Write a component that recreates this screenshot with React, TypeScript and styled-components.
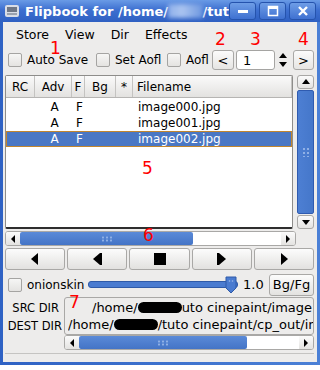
import React from "react";
import styled, { createGlobalStyle } from "styled-components";

const GlobalStyle = createGlobalStyle`
  body {
    margin: 0;
    background: #ffffff;
    font-family: "DejaVu Sans", "Liberation Sans", sans-serif;
  }
`;

const files = ["image000.jpg", "image001.jpg", "image002.jpg"];

const Tri = ({ dir, bar }: { dir: "l" | "r"; bar?: "l" | "r" }) => (
  <svg width="14" height="14" viewBox="0 0 14 14">
    {dir === "l" ? <polygon points="3,7 10,1 10,13" fill="#000" /> : <polygon points="11,7 4,1 4,13" fill="#000" />}
    {bar === "r" && <rect x="10" y="1" width="2" height="12" fill="#000" />}
    {bar === "l" && <rect x="2" y="1" width="2" height="12" fill="#000" />}
  </svg>
);

export default function App() {
  return (
    <>
      <GlobalStyle />
      <Window>
        <TitleBar>
          <AppIcon>
            <svg width="16" height="16" viewBox="0 0 16 16">
              <rect x="1" y="2" width="14" height="12" rx="2" fill="#d9dde6" />
              <rect x="3" y="4" width="10" height="5" fill="#6f7786" />
              <rect x="3" y="10" width="10" height="2" fill="#9aa2b0" />
            </svg>
          </AppIcon>
          <Title>Flipbook for /home/</Title>
          <Blur />
          <Title>/tut</Title>
          <WinButtons>
            <WinBtn>
              <svg width="12" height="12" viewBox="0 0 12 12"><rect x="1" y="5" width="10" height="3" fill="#fff" /></svg>
            </WinBtn>
            <WinBtn>
              <svg width="12" height="12" viewBox="0 0 12 12"><rect x="1.5" y="1.5" width="9" height="9" fill="none" stroke="#fff" strokeWidth="1.5" /><rect x="1" y="1" width="10" height="3" fill="#fff" /></svg>
            </WinBtn>
            <WinBtn>
              <svg width="12" height="12" viewBox="0 0 12 12"><path d="M2 2 L10 10 M10 2 L2 10" stroke="#fff" strokeWidth="2.4" /></svg>
            </WinBtn>
          </WinButtons>
        </TitleBar>
        <Body>
          <MenuBar>
            <MenuItem>Store</MenuItem>
            <MenuItem>View</MenuItem>
            <MenuItem>Dir</MenuItem>
            <MenuItem>Effects</MenuItem>
          </MenuBar>
          <ToolRow>
            <Check />
            <CheckLabel $w={69}>Auto Save</CheckLabel>
            <Check />
            <CheckLabel $w={52}>Set Aofl</CheckLabel>
            <Check />
            <CheckLabel $w={24}>Aofl</CheckLabel>
            <SmallBtn $w={22}>&lt;</SmallBtn>
            <SpinEntry>1</SpinEntry>
            <SpinArrows>
              <svg width="8" height="16" viewBox="0 0 8 16">
                <polygon points="4,1 8,6 0,6" fill="#000" />
                <polygon points="4,15 8,10 0,10" fill="#000" />
              </svg>
            </SpinArrows>
            <SmallBtn $w={21}>&gt;</SmallBtn>
          </ToolRow>
          <ListArea>
            <ListFrame>
              <HeaderRow>
                <HeadCell $w={29}>RC</HeadCell>
                <HeadCell $w={37}>Adv</HeadCell>
                <HeadCell $w={13}>F</HeadCell>
                <HeadCell $w={31}>Bg</HeadCell>
                <HeadCell $w={17}>*</HeadCell>
                <HeadCell $w={0} $grow>Filename</HeadCell>
              </HeaderRow>
              {files.map((f, i) => (
                <Row key={f} $sel={i === 2}>
                  <Cell $w={29} />
                  <Cell $w={37} $center>A</Cell>
                  <Cell $w={13} $center>F</Cell>
                  <Cell $w={31} />
                  <Cell $w={17} />
                  <Cell $w={0} $grow>{f}</Cell>
                </Row>
              ))}
            </ListFrame>
            <VScroll>
              <ArrowBox $h={14}>
                <svg width="8" height="6" viewBox="0 0 8 6"><polygon points="4,0 8,5 0,5" fill="#000" /></svg>
              </ArrowBox>
              <VThumb>
                <Grip />
              </VThumb>
              <ArrowBox $h={14}>
                <svg width="8" height="6" viewBox="0 0 8 6"><polygon points="4,6 8,1 0,1" fill="#000" /></svg>
              </ArrowBox>
            </VScroll>
          </ListArea>
          <HScrollRow>
            <HScroll $w={291}>
              <HArrow>
                <svg width="6" height="8" viewBox="0 0 6 8"><polygon points="1,4 5,0 5,8" fill="#000" /></svg>
              </HArrow>
              <HThumb $w={173}><HGrip /></HThumb>
              <Trough />
              <HArrow>
                <svg width="6" height="8" viewBox="0 0 6 8"><polygon points="5,4 1,0 1,8" fill="#000" /></svg>
              </HArrow>
            </HScroll>
          </HScrollRow>
          <PlayRow>
            <PlayBtn><Tri dir="l" /></PlayBtn>
            <PlayBtn><Tri dir="l" bar="r" /></PlayBtn>
            <PlayBtn>
              <svg width="14" height="14" viewBox="0 0 14 14"><rect x="1" y="1" width="12" height="12" fill="#000" /></svg>
            </PlayBtn>
            <PlayBtn><Tri dir="r" bar="l" /></PlayBtn>
            <PlayBtn><Tri dir="r" /></PlayBtn>
          </PlayRow>
          <OnionRow>
            <Check />
            <CheckLabel $w={61}>onionskin</CheckLabel>
            <Slider>
              <Track />
              <Thumb>
                <svg width="12" height="18" viewBox="0 0 12 18">
                  <path d="M1 1 H11 V12 L6 17 L1 12 Z" fill="#4a7bd0" stroke="#2f5aa8" strokeWidth="1" />
                  <circle cx="4.5" cy="5" r="0.8" fill="#9fbbe8" />
                  <circle cx="7.5" cy="5" r="0.8" fill="#9fbbe8" />
                </svg>
              </Thumb>
            </Slider>
            <SliderValue>1.0</SliderValue>
            <BgBtn>Bg/Fg</BgBtn>
          </OnionRow>
          <DirArea>
            <DirLabels>
              <span>SRC DIR</span>
              <span>DEST DIR</span>
            </DirLabels>
            <DirCol>
              <MarkSlot>
                <SlotMark>7</SlotMark>
              </MarkSlot>
              <DirBox>
                <DirLine $indent={24}>/home/<Redact $w={44} />uto cinepaint/image|</DirLine>
                <DirLine $indent={0}>/home/<Redact $w={44} />/tuto cinepaint/cp_out/ima</DirLine>
              </DirBox>
              <HScroll $w={250}>
                <HArrow>
                  <svg width="6" height="8" viewBox="0 0 6 8"><polygon points="1,4 5,0 5,8" fill="#000" /></svg>
                </HArrow>
                <HThumb $w={168}><HGrip /></HThumb>
                <Trough />
                <HArrow>
                  <svg width="6" height="8" viewBox="0 0 6 8"><polygon points="5,4 1,0 1,8" fill="#000" /></svg>
                </HArrow>
              </HScroll>
            </DirCol>
          </DirArea>
          <Separator />
        </Body>
        <Mark $x={50} $y={38}>1</Mark>
        <Mark $x={215} $y={29}>2</Mark>
        <Mark $x={250} $y={29}>3</Mark>
        <Mark $x={298} $y={29}>4</Mark>
        <Mark $x={142} $y={158}>5</Mark>
        <Mark $x={143} $y={225}>6</Mark>
      </Window>
    </>
  );
}

const Window = styled.div`
  position: relative;
  width: 320px;
  height: 365px;
  box-sizing: border-box;
  display: flex;
  flex-direction: column;
  background: linear-gradient(to right, #2f62c4, #4b80d6);
  padding: 0 3px 3px;
`;

const TitleBar = styled.div`
  height: 22px;
  flex-shrink: 0;
  display: flex;
  align-items: center;
  margin: 0 -3px;
  padding: 0 4px;
  background: linear-gradient(to bottom, #6a9be6, #3d6fd0 45%, #2f60c2);
`;

const AppIcon = styled.div`
  width: 16px;
  height: 16px;
  margin-right: 5px;
  display: flex;
`;

const Title = styled.span`
  color: #ffffff;
  font-weight: bold;
  font-size: 13px;
  white-space: nowrap;
`;

const Blur = styled.span`
  width: 58px;
  height: 14px;
  background: linear-gradient(to right, #8fb0ea, #aac4f0 40%, #6d97df);
  filter: blur(2px);
`;

const WinButtons = styled.div`
  margin-left: auto;
  display: flex;
  gap: 3px;
`;

const WinBtn = styled.div`
  width: 25px;
  height: 16px;
  border: 1px solid #2553ad;
  border-radius: 3px;
  background: linear-gradient(to bottom, #6e9de6, #3f71d1);
  display: flex;
  align-items: center;
  justify-content: center;
`;

const Body = styled.div`
  flex: 1;
  min-height: 0;
  background: #edeceb;
  display: flex;
  flex-direction: column;
  font-size: 13px;
  color: #000;
`;

const MenuBar = styled.div`
  height: 25px;
  flex-shrink: 0;
  display: flex;
  align-items: center;
  padding-left: 13px;
  gap: 16px;
`;

const MenuItem = styled.span`
  font-size: 12.5px;
`;

const ToolRow = styled.div`
  height: 26px;
  flex-shrink: 0;
  display: flex;
  align-items: center;
  padding-left: 5px;
`;

const Check = styled.div`
  width: 12px;
  height: 12px;
  border: 1px solid #a5a4a2;
  border-radius: 2px;
  background: linear-gradient(to bottom, #f6f6f5, #e4e3e1);
  flex-shrink: 0;
`;

const CheckLabel = styled.span<{ $w: number }>`
  width: ${({ $w }) => $w}px;
  flex-shrink: 0;
  margin-left: 5px;
  font-size: 12px;
  white-space: nowrap;
`;

const SmallBtn = styled.div<{ $w: number }>`
  width: ${({ $w }) => $w}px;
  height: 20px;
  box-sizing: border-box;
  border: 1px solid #a9a8a6;
  border-radius: 3px;
  background: linear-gradient(to bottom, #fbfbfb, #e6e5e3);
  display: flex;
  align-items: center;
  justify-content: center;
  font-size: 13px;
  margin-left: 2px;
`;

const SpinEntry = styled.div`
  width: 39px;
  height: 20px;
  box-sizing: border-box;
  margin-left: 2px;
  border: 1px solid #a5a4a2;
  border-radius: 3px;
  background: #fff;
  display: flex;
  align-items: center;
  padding-left: 6px;
  font-size: 13px;
`;

const SpinArrows = styled.div`
  width: 16px;
  display: flex;
  justify-content: center;
`;

const ListArea = styled.div`
  margin-top: 2px;
  height: 154px;
  flex-shrink: 0;
  display: flex;
  padding: 0 3px 0 2px;
  gap: 4px;
`;

const ListFrame = styled.div`
  width: 291px;
  box-sizing: border-box;
  border: 1px solid #8e8d8b;
  border-bottom: 2px solid #2e2e2e;
  border-radius: 2px;
  background: #fff;
  overflow: hidden;
`;

const HeaderRow = styled.div`
  height: 21px;
  display: flex;
  background: linear-gradient(to bottom, #fafafa, #e3e2e0);
  border-bottom: 1px solid #b6b5b3;
  margin-bottom: 1px;
`;

const HeadCell = styled.div<{ $w: number; $grow?: boolean }>`
  width: ${({ $w }) => $w}px;
  flex: ${({ $grow }) => ($grow ? 1 : "none")};
  box-sizing: border-box;
  border-right: 1px solid #c4c3c1;
  display: flex;
  align-items: center;
  justify-content: ${({ $grow }) => ($grow ? "flex-start" : "center")};
  padding-left: ${({ $grow }) => ($grow ? "4px" : "0")};
  font-size: 12px;
`;

const Row = styled.div<{ $sel: boolean }>`
  height: 16px;
  display: flex;
  align-items: center;
  box-sizing: border-box;
  background: ${({ $sel }) => ($sel ? "#4a77c4" : "transparent")};
  color: ${({ $sel }) => ($sel ? "#fff" : "#000")};
  border: 1px solid ${({ $sel }) => ($sel ? "#c2862e" : "transparent")};
`;

const Cell = styled.div<{ $w: number; $grow?: boolean; $center?: boolean }>`
  width: ${({ $w }) => $w}px;
  flex: ${({ $grow }) => ($grow ? 1 : "none")};
  text-align: ${({ $center }) => ($center ? "center" : "left")};
  padding-left: ${({ $grow }) => ($grow ? "4px" : "0")};
  font-size: 12px;
  white-space: nowrap;
`;

const VScroll = styled.div`
  width: 17px;
  display: flex;
  flex-direction: column;
  gap: 1px;
`;

const ArrowBox = styled.div<{ $h: number }>`
  height: ${({ $h }) => $h}px;
  box-sizing: border-box;
  border: 1px solid #a9a8a6;
  border-radius: 3px;
  background: linear-gradient(to bottom, #fbfbfb, #e4e3e1);
  display: flex;
  align-items: center;
  justify-content: center;
`;

const VThumb = styled.div`
  flex: 1;
  border: 1px solid #2f5bb0;
  border-radius: 2px;
  background: linear-gradient(to right, #4d7fd3, #4577ca);
  display: flex;
  align-items: center;
  justify-content: center;
`;

const Grip = styled.div`
  width: 8px;
  height: 10px;
  background-image: radial-gradient(circle, #8fb0e6 1px, transparent 1.2px);
  background-size: 4px 4px;
`;

const HScrollRow = styled.div`
  flex-shrink: 0;
  padding: 2px 0 0 2px;
`;

const HScroll = styled.div<{ $w: number }>`
  width: ${({ $w }) => $w}px;
  height: 15px;
  flex-shrink: 0;
  display: flex;
  box-sizing: border-box;
  border: 1px solid #a9a8a6;
  border-radius: 3px;
  background: #fff;
  overflow: hidden;
`;

const HArrow = styled.div`
  width: 14px;
  background: linear-gradient(to bottom, #fbfbfb, #e4e3e1);
  display: flex;
  align-items: center;
  justify-content: center;
`;

const HThumb = styled.div<{ $w: number }>`
  width: ${({ $w }) => $w}px;
  background: linear-gradient(to bottom, #5a8ad8, #4474c6);
  border-radius: 2px;
  display: flex;
  align-items: center;
  justify-content: center;
`;

const HGrip = styled.div`
  width: 12px;
  height: 6px;
  background-image: radial-gradient(circle, #8fb0e6 1px, transparent 1.2px);
  background-size: 4px 3px;
`;

const Trough = styled.div`
  flex: 1;
`;

const PlayRow = styled.div`
  margin-top: 2px;
  padding: 0 3px 0 2px;
  height: 22px;
  flex-shrink: 0;
  display: flex;
  gap: 2px;
`;

const PlayBtn = styled.div`
  flex: 1;
  box-sizing: border-box;
  border: 1px solid #a9a8a6;
  border-radius: 3px;
  background: linear-gradient(to bottom, #fcfcfc, #e2e1df);
  display: flex;
  align-items: center;
  justify-content: center;
`;

const OnionRow = styled.div`
  margin-top: 3px;
  height: 23px;
  flex-shrink: 0;
  display: flex;
  align-items: center;
  padding: 0 3px 0 5px;
`;

const Slider = styled.div`
  position: relative;
  width: 150px;
  height: 20px;
  display: flex;
  align-items: center;
`;

const Track = styled.div`
  width: 148px;
  height: 5px;
  border-radius: 3px;
  background: #4a7bd0;
  border: 1px solid #2f5aa8;
`;

const Thumb = styled.div`
  position: absolute;
  left: 137px;
  top: 1px;
  display: flex;
`;

const SliderValue = styled.span`
  margin-left: 5px;
  font-size: 13px;
`;

const BgBtn = styled.div`
  margin-left: auto;
  width: 45px;
  height: 22px;
  box-sizing: border-box;
  border: 1px solid #a9a8a6;
  border-radius: 3px;
  background: linear-gradient(to bottom, #fcfcfc, #e3e2e0);
  display: flex;
  align-items: center;
  justify-content: center;
  font-size: 13px;
`;

const DirArea = styled.div`
  margin-top: 1px;
  flex-shrink: 0;
  display: flex;
  padding: 0 3px 0 2px;
`;

const DirLabels = styled.div`
  width: 59px;
  display: flex;
  flex-direction: column;
  align-items: flex-end;
  padding-top: 2px;
  padding-right: 2px;
  box-sizing: border-box;
  font-size: 11.5px;
  line-height: 18px;
  white-space: nowrap;

  > span:first-child {
    padding-right: 3px;
  }
`;

const DirCol = styled.div`
  width: 250px;
  display: flex;
  flex-direction: column;
`;

const MarkSlot = styled.div`
  position: relative;
  z-index: 2;
  height: 0;
  overflow: visible;
`;

const SlotMark = styled.div`
  margin: -5px 0 0 5px;
  color: #ff0000;
  font-size: 17px;
  line-height: 20px;
  font-family: "DejaVu Sans", sans-serif;
`;

const DirBox = styled.div`
  height: 38px;
  box-sizing: border-box;
  border: 1px solid #a9a8a6;
  border-radius: 3px;
  background: #edeceb;
  overflow: hidden;
  padding: 1px 0 0 3px;
`;

const DirLine = styled.div<{ $indent: number }>`
  padding-left: ${({ $indent }) => $indent}px;
  font-size: 13px;
  line-height: 17px;
  white-space: nowrap;
  overflow: hidden;
`;

const Redact = styled.span<{ $w: number }>`
  display: inline-block;
  width: ${({ $w }) => $w}px;
  height: 11px;
  background: #000;
  border-radius: 6px;
  vertical-align: -1px;
`;

const Separator = styled.div`
  margin: 3px 3px 0 2px;
  border-top: 1px solid #c5c4c2;
`;

const Mark = styled.span<{ $x: number; $y: number }>`
  position: absolute;
  left: ${({ $x }) => $x}px;
  top: ${({ $y }) => $y}px;
  color: #ff0000;
  font-size: 17px;
  line-height: 20px;
  font-family: "DejaVu Sans", sans-serif;
`;
